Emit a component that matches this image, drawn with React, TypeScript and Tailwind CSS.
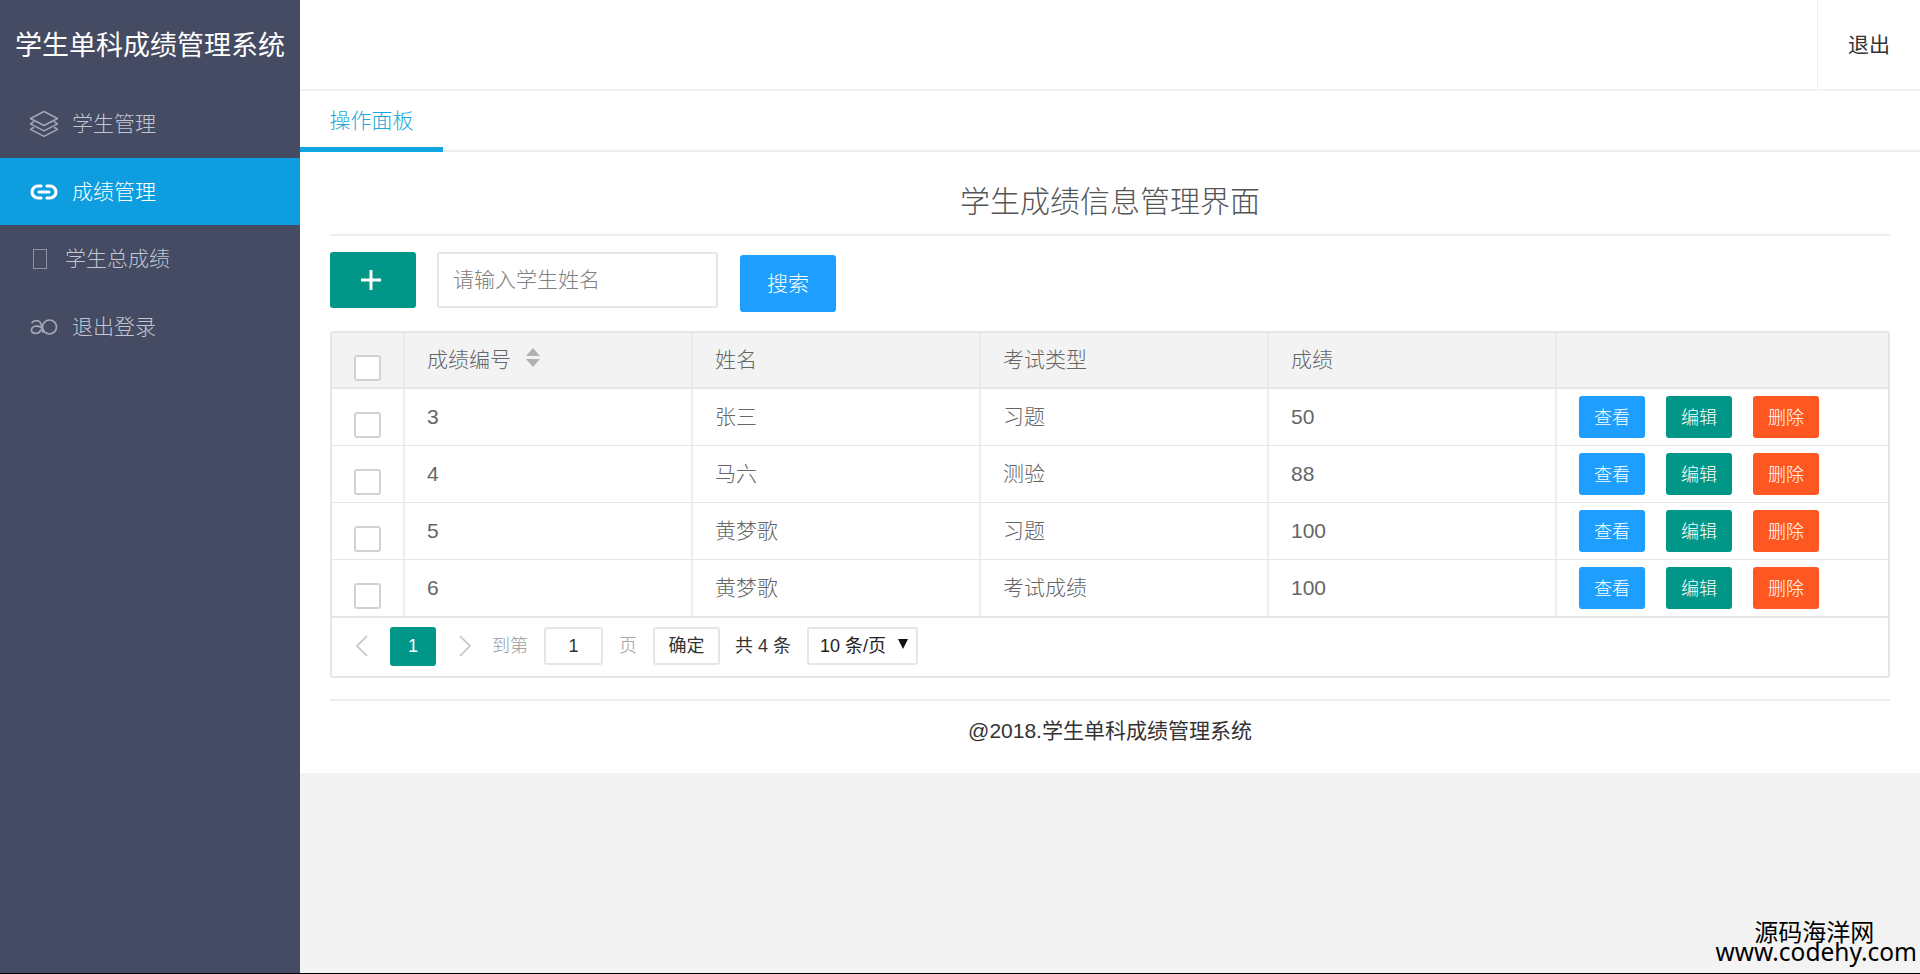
import React from "react";

const FONT = "font-['Liberation_Sans','Noto_Sans_CJK_SC',sans-serif]";

function LayersIcon() {
  return (
    <svg width="30" height="28" viewBox="0 0 30 28" fill="none" stroke="#a4a8b6" strokeWidth="1.5" strokeLinejoin="round" strokeLinecap="round" className="mr-[13px] ml-[29px] shrink-0">
      <path d="M15 1.500 28.500 8.500 15 15.500 1.500 8.500Z" />
      <path d="M4.500 12 1.500 13.800 15 20.800 28.500 13.800 25.500 12" />
      <path d="M4.500 17.500 1.500 19.300 15 26.300 28.500 19.300 25.500 17.500" />
    </svg>
  );
}

function LinkIcon() {
  return (
    <svg width="28" height="16" viewBox="0 0 28 16" fill="none" stroke="currentColor" strokeWidth="3.2" strokeLinecap="round" className="mr-[14px] ml-[30px] shrink-0">
      <path d="M11 2H8a6 6 0 0 0 0 12h3" />
      <path d="M17 2h3a6 6 0 0 1 0 12h-3" />
      <path d="M9 8h10" />
    </svg>
  );
}

function InfinityIcon() {
  return (
    <svg width="28" height="18" viewBox="0 0 28 18" fill="none" stroke="#a4a8b6" strokeWidth="1.7" strokeLinecap="round" className="mr-[14px] ml-[30px] shrink-0">
      <path d="M2 4.500C4 2.500 8 2 10 4c2 2.500 1.500 7 3 10" />
      <path d="M11 9.500C8 7.500 2 7.500 1.500 11.500 1 15.500 8 17.500 11 12" />
      <circle cx="19.500" cy="9" r="7" />
    </svg>
  );
}

function Chevron({ dir }: { dir: "l" | "r" }) {
  return (
    <svg width="14" height="24" viewBox="0 0 14 24" fill="none" stroke="#c2c2c2" strokeWidth="1.6">
      <path d={dir === "l" ? "M12 2 2 12l10 10" : "M2 2l10 10L2 22"} />
    </svg>
  );
}

function Checkbox() {
  return <span className="block h-[26px] w-[27px] rounded-[3px] border-2 border-[#d2d2d2] bg-white" />;
}

const rows = [
  ["3", "张三", "习题", "50"],
  ["4", "马六", "测验", "88"],
  ["5", "黄梦歌", "习题", "100"],
  ["6", "黄梦歌", "考试成绩", "100"],
];

const gridCols = "grid grid-cols-[73px_288px_288px_288px_288px_1fr]";
const cell = "flex items-center border-r-2 border-[#eeeeee] pl-[22px]";

function Row({ r, last }: { r: string[]; last: boolean }) {
  return (
    <div className={`${gridCols} ${last ? "h-[56px]" : "h-[57px] border-b border-[#e6e6e6]"}`}>
      <div className="border-r-2 border-[#eeeeee] pl-[22px] pt-[23px]">
        <Checkbox />
      </div>
      {r.map((t, i) => (
        <div key={i} className={cell}>{t}</div>
      ))}
      <div className="flex items-center gap-[21px] pl-[22px]">
        <button className="h-[42px] w-[66px] rounded-[3px] bg-[#1e9fff] pt-[2px] text-[18px] text-white">查看</button>
        <button className="h-[42px] w-[66px] rounded-[3px] bg-[#009688] pt-[2px] text-[18px] text-white">编辑</button>
        <button className="h-[42px] w-[66px] rounded-[3px] bg-[#ff5722] pt-[2px] text-[18px] text-white">删除</button>
      </div>
    </div>
  );
}

export default function App() {
  return (
    <div className={`${FONT} relative flex h-[974px] w-[1920px] overflow-hidden border-b border-black bg-[#f3f3f3] text-[21px] font-light text-[#666666]`}>
      <aside className="w-[300px] shrink-0 bg-[#444b63] text-[#c3c6d0]">
        <div className="flex h-[90px] items-center justify-center pt-[2px] text-[27px] font-normal text-white">学生单科成绩管理系统</div>
        <nav>
          <a className="flex h-[68px] items-center"><LayersIcon />学生管理</a>
          <a className="flex h-[67px] items-center bg-[#0e9ee0] text-white"><LinkIcon />成绩管理</a>
          <a className="flex h-[67px] items-center">
            <span className="mr-[18px] ml-[33px] block h-[20px] w-[14px] shrink-0 border border-[#8d91a3]" />
            学生总成绩
          </a>
          <a className="flex h-[70px] items-center"><InfinityIcon />退出登录</a>
        </nav>
      </aside>
      <main className="min-w-0 flex-1">
        <div className="bg-white">
          <header className="flex h-[91px] justify-end border-b-2 border-[#f2f2f2]">
            <div className="flex w-[103px] items-center border-l border-[#eeeeee] pl-[30px] font-normal text-[#333333]">退出</div>
          </header>
          <div className="flex h-[61px] border-b-2 border-[#eeeeee]">
            <div className="-mb-[1px] flex h-[61px] w-[143px] items-center justify-center border-b-[5px] border-[#12a6e0] pt-[4px] text-[#1aa9d6]">操作面板</div>
          </div>
          <div className="px-[30px]">
            <h1 className="border-b-2 border-[#eeeeee] pt-[32px] pb-[14px] text-center text-[30px] leading-[36px] text-[#555555]">学生成绩信息管理界面</h1>
            <div className="mt-[16px] flex h-[79px] items-start">
              <button className="flex h-[56px] w-[86px] items-center justify-center rounded-[3px] bg-[#009688] pr-[4px] text-[32px] leading-none text-white">
                <svg width="20" height="20" viewBox="0 0 20 20" stroke="currentColor" strokeWidth="3"><path d="M10 0v20M0 10h20" /></svg>
              </button>
              <input
                placeholder="请输入学生姓名"
                className="ml-[21px] h-[56px] w-[281px] rounded-[3px] border-2 border-[#e6e6e6] pl-[14px] placeholder:text-[#808080]"
              />
              <button className="mt-[3px] ml-[22px] h-[57px] w-[96px] rounded-[3px] bg-[#1e9fff] text-white">搜索</button>
            </div>
            <div className="rounded-[3px] border-2 border-[#e6e6e6]">
              <div className={`${gridCols} h-[56px] border-b-2 border-[#e6e6e6] bg-[#f3f3f3]`}>
                <div className="border-r-2 border-[#eaeaea] pl-[22px] pt-[22px]"><Checkbox /></div>
                <div className={`${cell} !border-[#eaeaea]`}>
                  成绩编号
                  <svg width="16" height="22" viewBox="0 0 16 22" fill="#b2b2b2" className="mb-[4px] ml-[14px]">
                    <path d="M8 1l7 8H1zM1 12h14l-7 8z" />
                  </svg>
                </div>
                <div className={`${cell} !border-[#eaeaea]`}>姓名</div>
                <div className={`${cell} !border-[#eaeaea]`}>考试类型</div>
                <div className={`${cell} !border-[#eaeaea]`}>成绩</div>
                <div />
              </div>
              {rows.map((r, i) => <Row key={i} r={r} last={i === 3} />)}
              <div className="flex h-[60px] items-start border-t-2 border-[#e6e6e6] pt-[9px] text-[18px]">
                <span className="mt-[7px] ml-[23px]"><Chevron dir="l" /></span>
                <span className="ml-[21px] flex h-[39px] w-[46px] items-center justify-center rounded-[3px] bg-[#009688] text-white">1</span>
                <span className="mt-[7px] ml-[22px]"><Chevron dir="r" /></span>
                <span className="ml-[20px] h-[38px] leading-[38px] text-[#999999]">到第</span>
                <input defaultValue="1" className="ml-[16px] h-[38px] w-[59px] rounded-[3px] border-2 border-[#e6e6e6] text-center font-normal text-[#333333]" />
                <span className="ml-[16px] h-[38px] leading-[38px] text-[#999999]">页</span>
                <button className="ml-[16px] h-[38px] w-[67px] rounded-[3px] border-2 border-[#e6e6e6] font-normal text-[#333333]">确定</button>
                <span className="ml-[15px] h-[38px] leading-[38px] font-normal text-[#333333]">共 4 条</span>
                <div className="relative ml-[16px] flex h-[38px] w-[111px] items-center rounded-[3px] border-2 border-[#e6e6e6] pl-[11px] font-normal text-[#222222]">
                  10 条/页
                  <svg width="10" height="10" viewBox="0 0 12 12" fill="#111111" className="absolute top-[10px] right-[8px]"><path d="M0 0h12L6 12z" /></svg>
                </div>
              </div>
            </div>
            <div className="mt-[21px] h-[74px] border-t-2 border-[#eeeeee] pt-[14px] text-center leading-[32px] font-normal text-[#333333]">@2018.学生单科成绩管理系统</div>
          </div>
        </div>
      </main>
      <div className="absolute right-[3px] bottom-[9px] flex flex-col items-center font-['Noto_Sans','Noto_Sans_CJK_SC',sans-serif] font-normal text-black">
        <div className="mr-[4px] text-[24px] leading-[16px]">源码海洋网</div>
        <div className="text-[24.5px] leading-[24px]">www.codehy.com</div>
      </div>
    </div>
  );
}
